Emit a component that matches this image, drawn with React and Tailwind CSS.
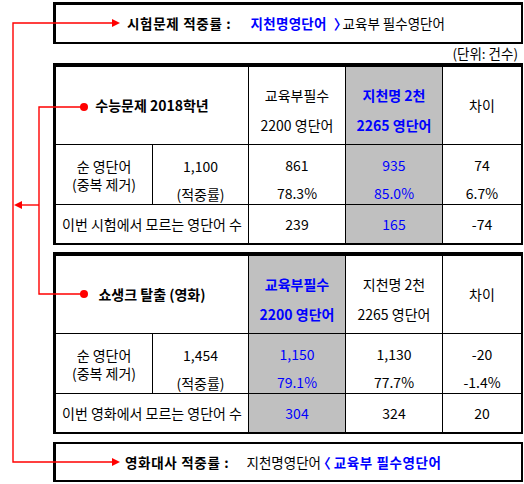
import React from "react";

const BLUE = "text-[#0000ff]";

const Cell = ({ gray, className = "", children }) => (
  <div
    className={`flex flex-col items-center justify-center text-center ${
      gray ? "bg-[#c0c0c0]" : "bg-white"
    } ${className}`}
  >
    {children}
  </div>
);

const TwoLine = ({ top, bottom, className = "" }) => (
  <div className={`flex flex-col items-center pt-[9px] ${className}`}>
    <span className="leading-[20px]">{top}</span>
    <span className="leading-[20px] mt-[10px]">{bottom}</span>
  </div>
);

const Pair = ({ top, bottom, className = "" }) => (
  <div className={`flex flex-col items-center pt-[8px] ${className}`}>
    <span className="leading-[20px]">{top}</span>
    <span className="leading-[20px] mt-[8px]">{bottom}</span>
  </div>
);

const Table = ({ title, cols, count, rate, unknown, grayCol }) => (
  <div className="grid grid-cols-[96px_95px_96px_96px_78px] grid-rows-[77px_59px_38px] gap-px bg-black border-t-4 border-l-[3px] border-r-2 border-b-2 border-black text-[14px]">
    <Cell className="col-span-2 font-bold">{title}</Cell>
    {cols.map((c, i) => (
      <Cell key={i} gray={grayCol === i}>
        <TwoLine
          top={c[0]}
          bottom={c[1]}
          className={grayCol === i ? `${BLUE} font-bold` : ""}
        />
      </Cell>
    ))}
    <Cell>차이</Cell>

    <Cell>
      <span className="leading-[18px]">순 영단어</span>
      <span className="leading-[18px]">(중복 제거)</span>
    </Cell>
    <Cell>
      <Pair top={count} bottom="(적중률)" className="pt-[10px]" />
    </Cell>
    {rate.map((r, i) => (
      <Cell key={i} gray={grayCol === i}>
        <Pair top={r[0]} bottom={r[1]} className={grayCol === i ? BLUE : ""} />
      </Cell>
    ))}

    <Cell className="col-span-2">{unknown.label}</Cell>
    {unknown.values.map((v, i) => (
      <Cell key={i} gray={grayCol === i} className={grayCol === i ? BLUE : ""}>
        {v}
      </Cell>
    ))}
  </div>
);

export default function App() {
  return (
    <div
      className="relative w-[524px] h-[484px] bg-white text-black text-[13.5px] [font-feature-settings:'halt']"
      style={{ fontFamily: '"Noto Sans CJK KR", "Noto Sans", sans-serif' }}
    >
      <div className="flex flex-col pl-[53px] pt-[2px] w-[523px]">
        <div className="h-[42px] flex items-center pl-[71px] border-t-[3px] border-l-[3px] border-r-2 border-b-2 border-black">
          <span className="font-bold tracking-[0.7px]">시험문제 적중률 :</span>
          <span className={`ml-[19px] font-bold tracking-[0.3px] ${BLUE}`}>지천명영단어</span>
          <span className={`font-bold ${BLUE} ml-[7px]`}>〉</span>
          <span className="ml-[2px]">교육부 필수영단어</span>
        </div>

        <div className="h-[19px] flex items-center justify-end pr-[5px]">
          (단위: 건수)
        </div>

        <Table
          title="수능문제 2018학년"
          grayCol={1}
          cols={[
            ["교육부필수", "2200 영단어"],
            ["지천명 2천", "2265 영단어"],
          ]}
          count="1,100"
          rate={[
            ["861", "78.3%"],
            ["935", "85.0%"],
            ["74", "6.7%"],
          ]}
          unknown={{ label: "이번 시험에서 모르는 영단어 수", values: ["239", "165", "-74"] }}
        />

        <div className="h-[7px]" />

        <Table
          title="쇼생크 탈출 (영화)"
          grayCol={0}
          cols={[
            ["교육부필수", "2200 영단어"],
            ["지천명 2천", "2265 영단어"],
          ]}
          count="1,454"
          rate={[
            ["1,150", "79.1%"],
            ["1,130", "77.7%"],
            ["-20", "-1.4%"],
          ]}
          unknown={{ label: "이번 영화에서 모르는 영단어 수", values: ["304", "324", "20"] }}
        />

        <div className="h-[8px]" />

        <div className="h-[40px] flex items-center pl-[69px] border-t-2 border-l-[3px] border-r-2 border-b-2 border-black">
          <span className="font-bold tracking-[0.7px]">영화대사 적중률 :</span>
          <span className="ml-[17px]">지천명영단어</span>
          <span className={`font-bold ${BLUE} ml-[3px]`}>〈</span>
          <span className={`font-bold tracking-[0.6px] ${BLUE} ml-[3px]`}>교육부 필수영단어</span>
        </div>
      </div>

      {/* connectors */}
      <svg
        className="absolute inset-0 pointer-events-none"
        width="524"
        height="484"
        viewBox="0 0 524 484"
      >
        <g stroke="#ff0000" strokeWidth="1.4" fill="none">
          <polyline points="112,23 13,23 13,462 112,462" />
          <polyline points="84,107 39,107 39,294 84,294" />
          <line x1="39" y1="205" x2="21" y2="205" />
        </g>
        <g fill="#ff0000">
          <polygon points="112,19 120,23 112,27" />
          <polygon points="112,458 120,462 112,466" />
          <polygon points="22,201 14,205 22,209" />
          <circle cx="84" cy="107" r="4" />
          <circle cx="84" cy="294" r="4" />
        </g>
      </svg>
    </div>
  );
}
